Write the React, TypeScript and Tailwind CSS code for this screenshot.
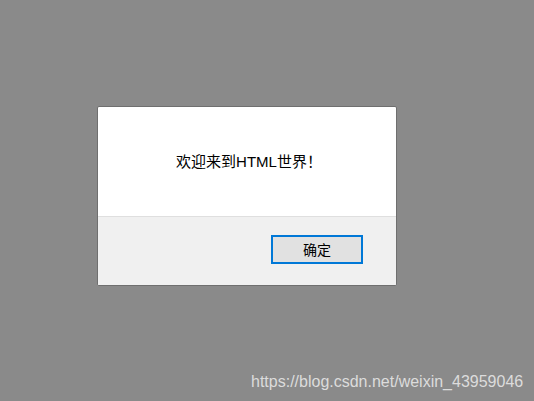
export default function App() {
  return (
    <div
      className="relative w-[534px] h-[401px] bg-[#8a8a8a] pt-[106px] pl-[97px] overflow-hidden"
      style={{ fontFamily: '"Liberation Sans", "Noto Sans CJK SC", sans-serif' }}
    >
      {/* Alert dialog */}
      <div className="w-[300px] h-[180px] flex flex-col border border-[#6f6f6f] rounded-[2px] bg-white overflow-hidden">
        <div className="h-[110px] flex items-center justify-center pl-[4px] pt-[2px] text-[15px] text-black border-b border-[#dfdfdf]">
          欢迎来到HTML世界！
        </div>
        <div className="flex-1 bg-[#f0f0f0] flex justify-end items-start pt-[18px] pr-[33px]">
          <button className="w-[92px] h-[29px] border-2 border-[#0078d7] bg-[#e1e1e1] text-[14px] text-black leading-none">
            确定
          </button>
        </div>
      </div>

      {/* Watermark */}
      <div className="absolute left-[251px] top-[370px] text-[16px] text-[#dcdcdc]">
        https://blog.csdn.net/weixin_43959046
      </div>
    </div>
  )
}
